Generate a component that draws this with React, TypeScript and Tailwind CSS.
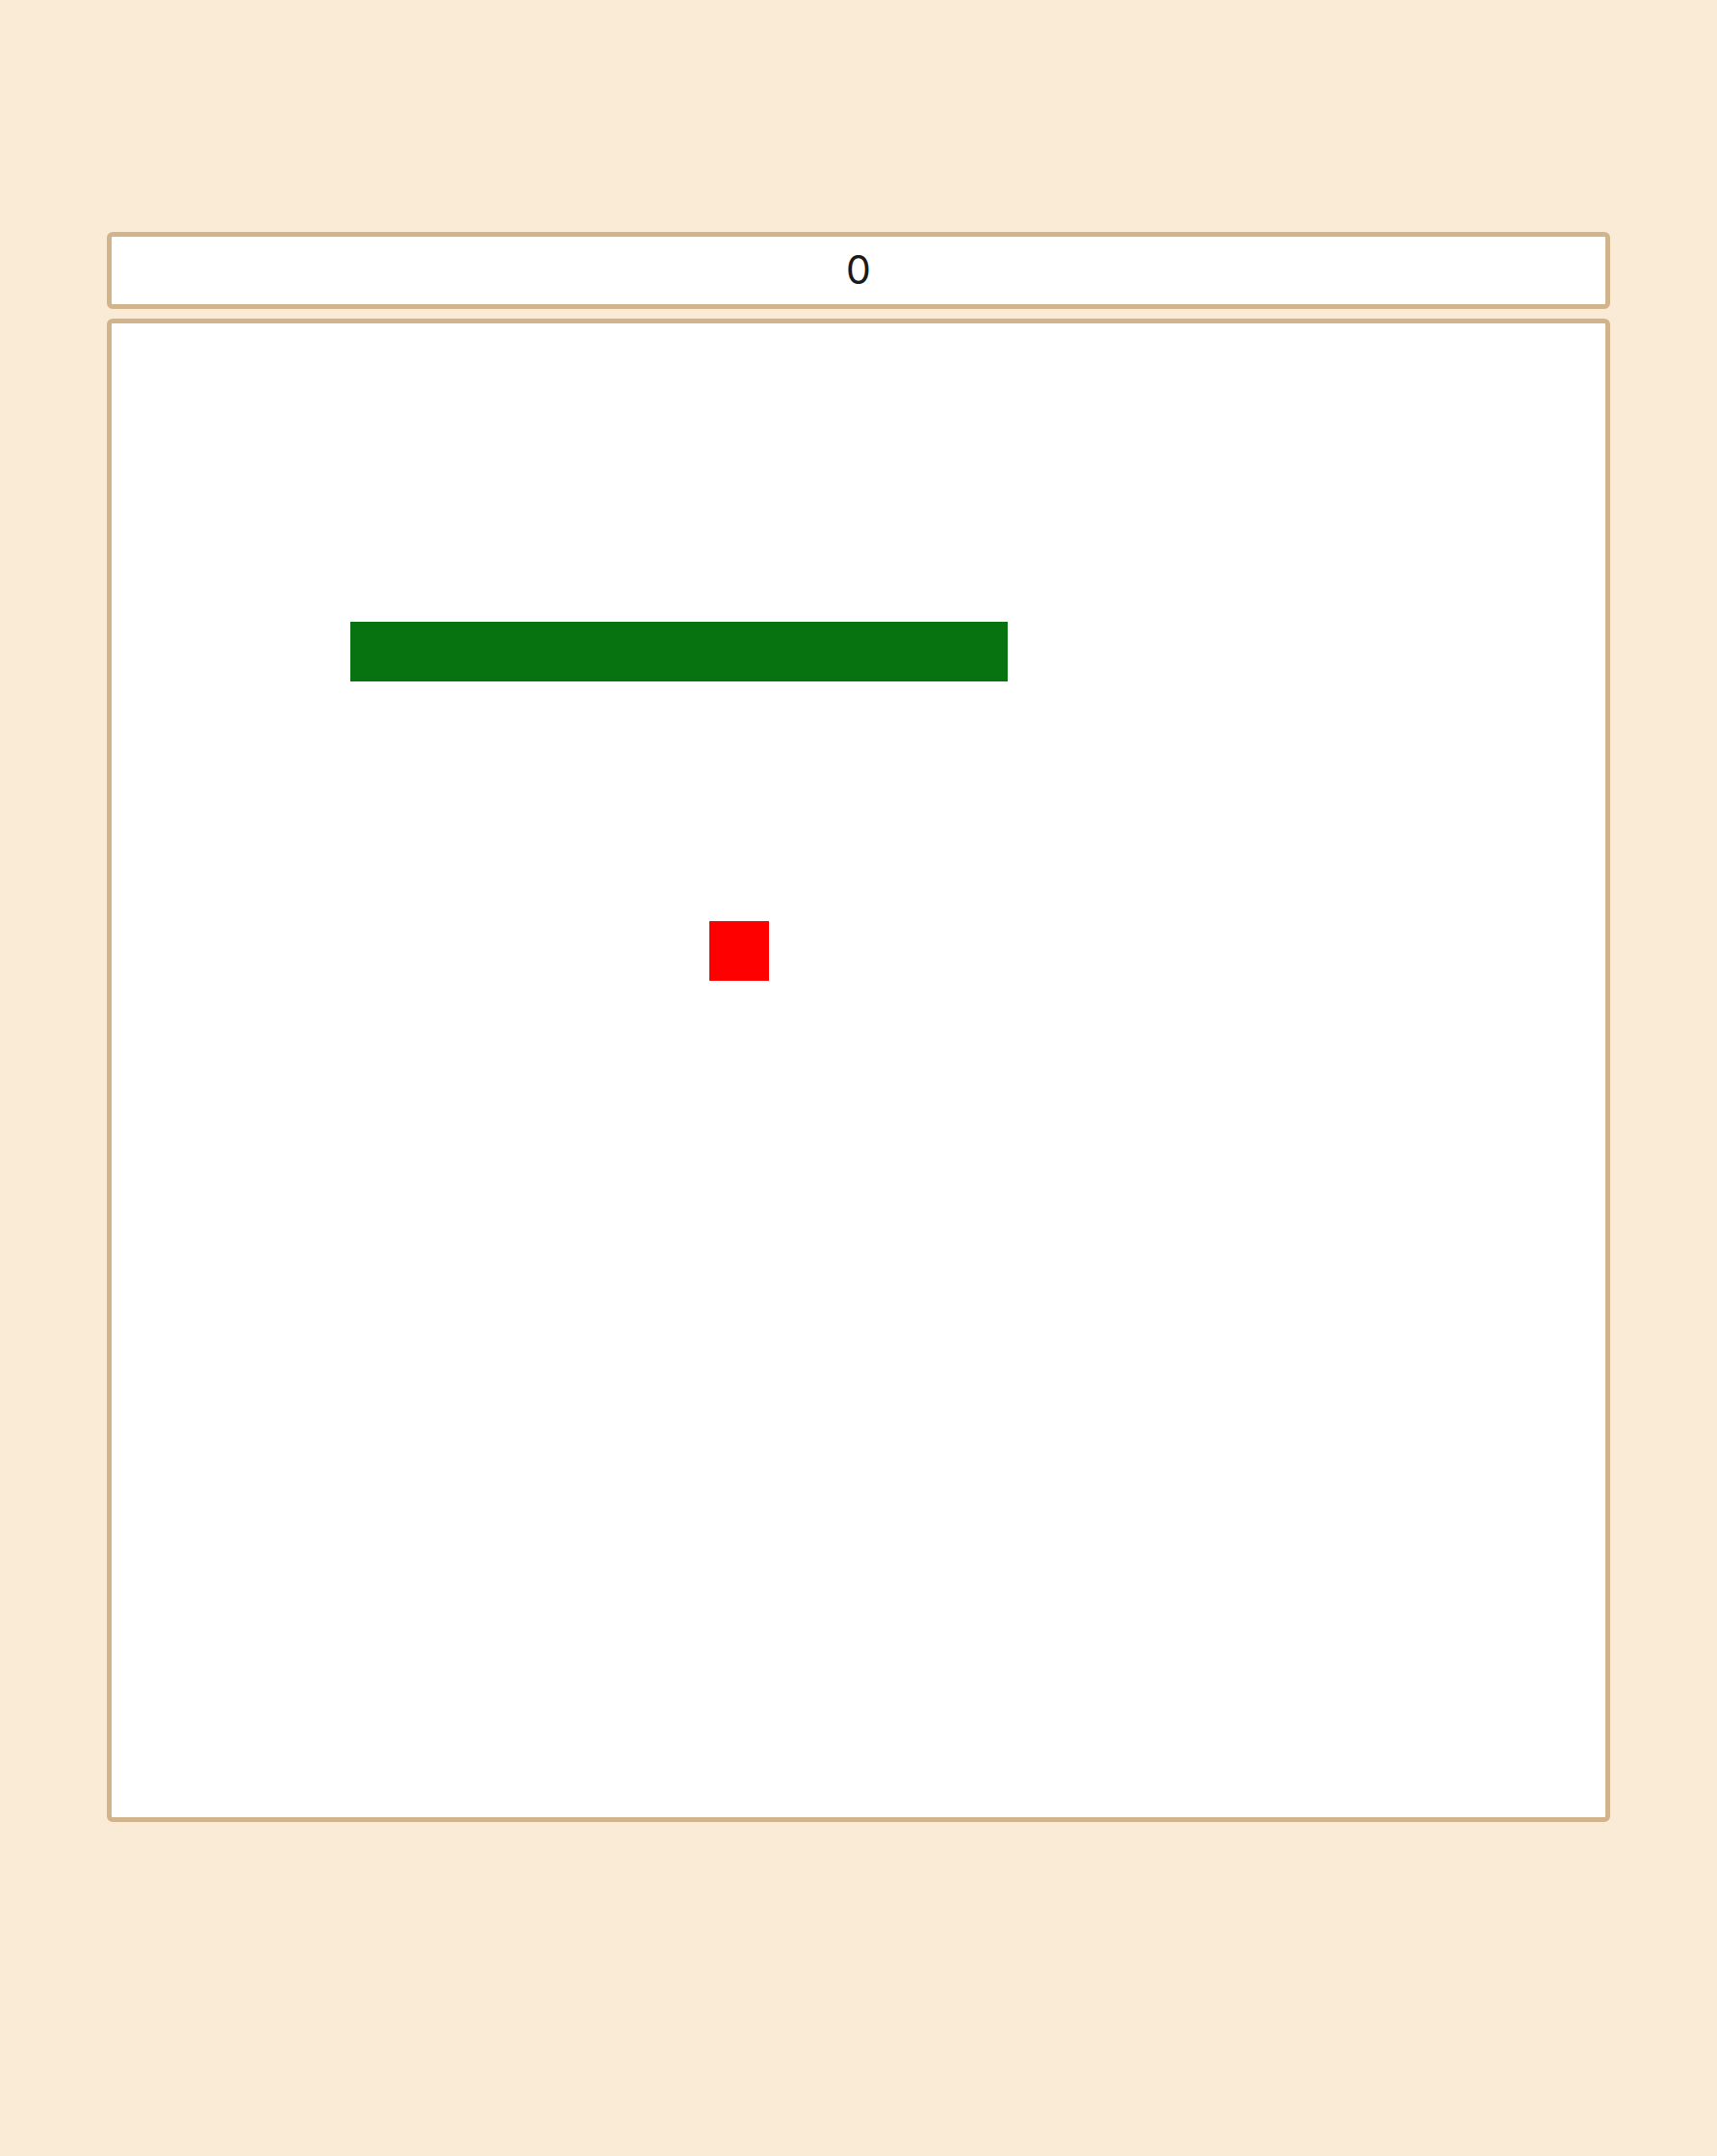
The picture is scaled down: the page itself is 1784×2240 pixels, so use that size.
const SIZE = 25;

const snake = [
  { x: 14, y: 5 },
  { x: 13, y: 5 },
  { x: 12, y: 5 },
  { x: 11, y: 5 },
  { x: 10, y: 5 },
  { x: 9, y: 5 },
  { x: 8, y: 5 },
  { x: 7, y: 5 },
  { x: 6, y: 5 },
  { x: 5, y: 5 },
  { x: 4, y: 5 },
];

const food = { x: 10, y: 10 };

export default function App() {
  const score = 0;

  return (
    <div className="flex min-h-screen flex-col items-center bg-[#faebd7] pt-[241px] font-['Inter',sans-serif]">
      <div className="flex h-[80px] w-[1562px] items-center justify-center rounded-md border-[5px] border-[#d2b48c] bg-white text-[41px] text-[#1a1a1a]">
        {score}
      </div>
      <div className="mt-[10px] grid h-[1562px] w-[1562px] grid-cols-[repeat(25,1fr)] grid-rows-[repeat(25,1fr)] rounded-md border-[5px] border-[#d2b48c] bg-white">
        {snake.map((cell, i) => (
          <div
            key={i}
            className="bg-[#077210]"
            style={{ gridColumn: cell.x + 1, gridRow: cell.y + 1 }}
          />
        ))}
        <div
          className="bg-[#ff0000]"
          style={{ gridColumn: food.x + 1, gridRow: food.y + 1 }}
        />
        {/* keeps the grid at SIZE x SIZE even when empty */}
        <div style={{ gridColumn: SIZE, gridRow: SIZE }} />
      </div>
    </div>
  );
}
